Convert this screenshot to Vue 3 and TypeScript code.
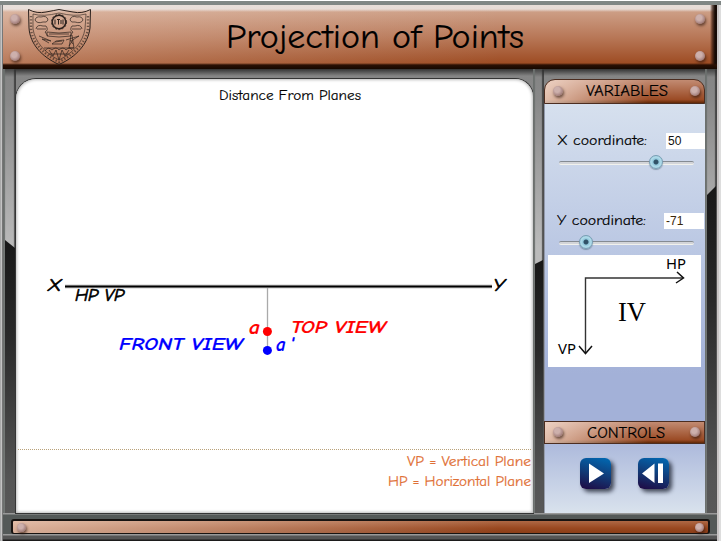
<script setup lang="ts">
import { ref } from 'vue'

interface Coordinate {
  name: string
  value: number
  knob: number
  labelWidth: number
}

const coordinates = ref<Coordinate[]>([
  { name: 'X', value: 50, knob: 97, labelWidth: 90 },
  { name: 'Y', value: -71, knob: 27, labelWidth: 89 },
])
</script>

<template>
  <div class="app">
    <header class="banner">
      <svg width="714" height="64" viewBox="3 5 714 64">
        <g class="crest" fill="none" stroke="#2b211d" stroke-width="0.7">
          <path d="M28.500 9.500Q37 14 46 12Q54 10.500 59 9.500Q64 10.500 73 12Q82 14 90.500 9.500L90 28C88 44 76 57 59 64.500C42 57 30 44 29 28Z" stroke-width="1" />
          <path d="M33 14Q43 17 59 13Q75 17 86 14L85 29C83 42 73 53 59 60C45 53 35 42 33 29Z" stroke-width="0.6" />
          <path d="M31 16V29C32 42 43 54 59 62C75 54 86 42 88 29V16" stroke-width="2.400" stroke-dasharray="1.300 1.900" opacity="0.6" />
          <circle cx="59" cy="22" r="6.800" stroke-width="1.500" />
          <circle cx="59" cy="22" r="7.600" stroke-width="0.8" stroke-dasharray="2 1.500" />
          <path d="M55 19.500V24.500M57 19.500H60M58.500 19.500V24.500M61 20V24M63 19.500V24.500" stroke-width="1" />
          <path d="M35 20Q36 16 41 17Q47 15 48 20Q47 23 43 22Q37 24 35 20ZM36 29Q37 24 43 26H46Q49 30 45 32L48 36M37 29H46" />
          <path d="M83 20Q82 16 77 17Q71 15 70 20Q71 23 75 22Q81 24 83 20ZM82 29Q81 24 75 26H72Q69 30 73 32L70 36M81 29H72" />
          <path d="M47 32Q59 34 71 32V36Q59 38 47 36ZM49 34H69M39 36L51 41L42 39L49 43M66 40L79 36L71 41" />
          <path d="M52 44L56 41L64 40L62 44ZM55 42L62 41M71 35L69 48H74L72 35M70 40L73 44M73 40L69 46" />
          <path d="M44 48H74M45 51Q48 46 52 50Q56 46 59 50Q63 46 66 50Q70 46 72 50M49 50L53 56L56 50L59 60L62 50L65 56L69 50M49 54H69" />
        </g>
        <text class="hand title" x="226" y="47.500" font-size="34" textLength="298" lengthAdjust="spacingAndGlyphs">Projection of Points</text>
      </svg>
      <div class="rivets left"><i class="rivet"></i><i class="rivet"></i></div>
      <div class="rivets right"><i class="rivet"></i><i class="rivet"></i></div>
    </header>

    <main class="workspace">
      <div class="rail rail-left"><div class="shade"></div></div>

      <section class="board">
        <svg width="517" height="434" viewBox="16 79 517 434">
          <text class="hand ink" x="219" y="100" font-size="14.500" textLength="142" lengthAdjust="spacingAndGlyphs">Distance From Planes</text>
          <path d="M267.500 288V348" stroke="#aaa" stroke-width="1.300" />
          <path d="M65 286.500H492" stroke="#aaa" stroke-width="4" opacity="0.6" />
          <path d="M65 286.500H492" stroke="#000" stroke-width="2.200" />
          <g class="hand note">
            <g class="thin">
              <text x="48" y="290.500" font-size="17.500" textLength="13" lengthAdjust="spacingAndGlyphs">X</text>
              <text x="493" y="290.500" font-size="17.500" textLength="12" lengthAdjust="spacingAndGlyphs">Y</text>
              <text x="75" y="301" font-size="18" textLength="49" lengthAdjust="spacingAndGlyphs">HP VP</text>
            </g>
            <g fill="#f00" stroke="#f00">
              <text x="249" y="333.500" font-size="19" textLength="11" lengthAdjust="spacingAndGlyphs">a</text>
              <text x="291" y="333" font-size="18" textLength="95" lengthAdjust="spacingAndGlyphs">TOP VIEW</text>
            </g>
            <g fill="#00f" stroke="#00f">
              <text x="119" y="350" font-size="18" textLength="124" lengthAdjust="spacingAndGlyphs">FRONT VIEW</text>
              <text x="276" y="350.500" font-size="19" textLength="18" lengthAdjust="spacing">a'</text>
            </g>
          </g>
          <circle cx="267.400" cy="331.500" r="4.500" fill="#f00" />
          <circle cx="267.400" cy="350.400" r="4.500" fill="#00f" />
          <path d="M18 449.500H531" stroke="#b9a27a" stroke-dasharray="1 1" />
          <g class="hand legend" fill="#df7036">
            <text x="407" y="466" font-size="14.500" textLength="124" lengthAdjust="spacingAndGlyphs">VP = Vertical Plane</text>
            <text x="388" y="486" font-size="14.500" textLength="143" lengthAdjust="spacingAndGlyphs">HP = Horizontal Plane</text>
          </g>
        </svg>
      </section>

      <div class="rail rail-middle"><div class="shade"></div></div>

      <aside class="sidebar">
        <h2 class="plate plate-top">
          <i class="rivet"></i>
          <svg width="84" height="20"><text class="hand ink" x="1" y="15" font-size="15" textLength="82" lengthAdjust="spacingAndGlyphs">VARIABLES</text></svg>
          <i class="rivet"></i>
        </h2>
        <div class="variables">
          <div v-for="item in coordinates" :key="item.name" class="field">
            <div class="field-row">
              <svg width="107" height="20"><text class="hand ink" x="1" y="14" font-size="14.500" :textLength="item.labelWidth" lengthAdjust="spacingAndGlyphs">{{ item.name }} coordinate:</text></svg>
              <span class="value" :class="{ negative: item.value < 0 }">{{ item.value }}</span>
            </div>
            <div class="track"><i class="knob" :style="{ left: item.knob + 'px' }"></i></div>
          </div>
          <div class="quadrant">
            <svg width="153" height="112" viewBox="548 255 153 112">
              <path d="M585.500 353V278H683" fill="none" stroke="#333" stroke-width="1.400" />
              <path d="M677 272L683.500 278L676 283M579 346L585.500 353.500L592 346" fill="none" stroke="#111" stroke-width="1.500" />
              <text class="sans" x="666" y="269" font-size="14.500" textLength="20" lengthAdjust="spacingAndGlyphs">HP</text>
              <text class="sans" x="558" y="354" font-size="14.500" textLength="18" lengthAdjust="spacingAndGlyphs">VP</text>
              <text class="serif" x="618" y="320.500" font-size="27" textLength="28" lengthAdjust="spacingAndGlyphs">IV</text>
            </svg>
          </div>
        </div>
        <h2 class="plate plate-controls">
          <i class="rivet"></i>
          <svg width="82" height="20"><text class="hand ink" x="1" y="16" font-size="15" textLength="78" lengthAdjust="spacingAndGlyphs">CONTROLS</text></svg>
          <i class="rivet"></i>
        </h2>
        <div class="controls">
          <button class="control" aria-label="Play">
            <svg width="31" height="31"><path d="M9 5.500L24 15.500L9 25Z" fill="#fff" /></svg>
          </button>
          <button class="control" aria-label="Step back">
            <svg width="31" height="31"><path d="M16.500 5.500V25L4 15.500ZM20 5.500H25V25H20Z" fill="#fff" /></svg>
          </button>
        </div>
      </aside>

      <div class="rail rail-right"><div class="shade"></div></div>
    </main>

    <footer class="base">
      <div class="bar"><i class="rivet"></i><i class="rivet"></i></div>
    </footer>
  </div>
</template>

<style>
body { margin: 0; background: #fff; }
</style>

<style scoped>
.app {
  box-sizing: border-box;
  width: 721px;
  height: 541px;
  padding: 5px 4px 0 3px;
  background:
    linear-gradient(#fff 1px, #808785 1px, #808785 5px, transparent 5px),
    linear-gradient(90deg, #aaa 0 1px, #c4c4c4 1px 2px, #777 2px 3px, #707572 3px 716px, #383838 716px 717px, #c9c5c5 717px 719px, #ddd 719px);
  overflow: hidden;
}
.hand { font-family: "Comic Sans MS", "Comic Neue", Lato, sans-serif; }
.title { stroke: #000; stroke-width: 0.15; }
.ink { stroke: #000; stroke-width: 0.15; }
.legend { stroke: #df7036; stroke-width: 0.2; }
.sans { font-family: "Noto Sans", sans-serif; }
.serif { font-family: "Liberation Serif", serif; }
svg { display: block; overflow: visible; }
.banner {
  position: relative;
  height: 64px;
  box-sizing: border-box;
  background:
    linear-gradient(transparent 58px, #2a1004 60px, #160800),
    linear-gradient(270deg, #160a05 0 2px, rgba(50, 20, 8, 0.6) 5px, transparent 7px),
    linear-gradient(rgba(235, 230, 228, 0.85) 0 4px, transparent 7px),
    linear-gradient(90deg, rgba(255, 240, 230, 0.28), transparent 70%),
    linear-gradient(#d2a891, #b87858 32px, #9d4b22 59px);
}
.rivets {
  position: absolute;
  top: 9px;
  display: flex;
  flex-direction: column;
  gap: 26.5px;
}
.left { left: 7px; }
.right { right: 12px; }
.rivet {
  display: block;
  flex: none;
  width: 10px;
  height: 10px;
  border-radius: 50%;
  background: radial-gradient(circle at 42% 38%, #cdb0ac 0 30%, #b3918e 55%, #765350);
  box-shadow: 1px 2px 3px rgba(45, 20, 10, 0.65);
}
.workspace {
  display: grid;
  grid-template-columns: 13px 517px 11px 161px 12px;
  height: 444px;
  background: linear-gradient(#333, #858585 7px, #888 40px, #555 100%);
}
.rail {
  background: linear-gradient(#444 0, #858585 8px, #888 30px, #bbb 180px);
  box-shadow: inset 2px 0 1px #6c706e, inset -2px 0 1px rgba(40, 40, 40, 0.7);
}
.shade {
  margin: 0 1px 0 2px;
  background: linear-gradient(#181818, #292929 35%, #555 88%, #585858);
}
.rail-left .shade { margin-top: 171px; height: 273px; clip-path: polygon(0 0, 100% 8px, 100% 100%, 0 100%); }
.rail-middle .shade { margin-top: 191px; height: 253px; clip-path: polygon(0 4px, 100% 0, 100% 100%, 0 100%); }
.rail-right .shade { margin-top: 117px; height: 327px; clip-path: polygon(0 9px, 100% 0, 100% 100%, 0 100%); }
.board {
  margin-top: 10px;
  height: 434px;
  border-radius: 20px 18px 0 0;
  background: #fff;
  box-shadow: inset 0 0 3px 1px #bbb, 0 0 0 1px #353535;
  overflow: hidden;
}
.note { font-weight: 600; font-style: italic; stroke-width: 0.15; }
.thin { font-weight: 400; stroke: #000; stroke-width: 0.7; }
.sidebar {
  margin-top: 10px;
  height: 434px;
  display: flex;
  flex-direction: column;
}
.plate {
  box-sizing: border-box;
  flex: none;
  display: flex;
  align-items: center;
  justify-content: space-between;
  margin: 0;
  padding: 0 4px 2px 8px;
  font-weight: 400;
  border: 1px solid #4c2d20;
  background: linear-gradient(90deg, rgba(255, 238, 228, 0.7), transparent 65%), linear-gradient(#c28b72, #9b4b25 85%, #602807);
}
.plate-top { height: 25px; border-radius: 11px 11px 0 0; }
.plate-controls { height: 23px; }
.variables {
  box-sizing: border-box;
  height: 317px;
  padding: 27px 0 0 4px;
  background: linear-gradient(#d6e0ee, #bac7e3 47%, #a3b1d8 85%, #a3b1d8);
  border-left: 1px solid #9299ab;
}
.field { height: 80px; }
.field:nth-child(2) { height: 44px; }
.field-row {
  display: flex;
  height: 20px;
  padding-left: 7px;
}
.value {
  box-sizing: border-box;
  width: 39px;
  height: 16px;
  margin: 2px 0 0 3px;
  padding-left: 2px;
  background: #fff;
  color: #111;
  font: 12px/16px "Liberation Sans", sans-serif;
}
.negative { width: 40px; margin-left: 1px; color: #3b2608; }
.track {
  position: relative;
  width: 135px;
  height: 2px;
  margin: 10px 0 0 10px;
  border-top: 1px solid #858b92;
  border-bottom: 1px solid #f1f1ec;
  border-radius: 2px;
  background: #d3d5d9;
}
.knob {
  position: absolute;
  top: -7px;
  width: 14px;
  height: 14px;
  margin-left: -7px;
  box-sizing: border-box;
  border: 1px solid #789eb3;
  border-radius: 50%;
  background: radial-gradient(circle, #315267 0 2px, #91c8dc 3px, #b2dcea 5px, #84bcd1);
  box-shadow: 0 1px 1px rgba(50, 80, 100, 0.45);
}
.quadrant {
  width: 153px;
  height: 112px;
  margin-left: -1px;
  background: #fff;
}
.controls {
  box-sizing: border-box;
  flex: 1;
  display: flex;
  gap: 27px;
  padding: 14px 0 0 35px;
  background: linear-gradient(#adbadc, #d9e2ed);
  border-left: 1px solid #969dac;
}
.control {
  width: 31px;
  height: 31px;
  padding: 0;
  border: 0;
  border-radius: 6px;
  background: linear-gradient(195deg, #006bb5, #123773 55%, #200842);
  box-shadow: 3px 3px 4px rgba(20, 25, 40, 0.75);
}
.base {
  box-sizing: border-box;
  height: 28px;
  padding: 6px 7px 0 8px;
  background: linear-gradient(#999 0 1px, #545958 2px 21px, #999 21px 22px, #555 23px 26px, #1c1b1b 27px);
}
.bar {
  box-sizing: border-box;
  display: flex;
  justify-content: space-between;
  align-items: center;
  height: 15px;
  padding: 0 4px 0 4px;
  border: solid #171311;
  border-width: 2px 2px 1px;
  border-radius: 3px;
  background: linear-gradient(90deg, rgba(255, 235, 222, 0.65), transparent 70%), linear-gradient(#ae6845, #994820 60%, #8a3d18);
}
.bar .rivet { width: 9px; height: 9px; }
</style>
